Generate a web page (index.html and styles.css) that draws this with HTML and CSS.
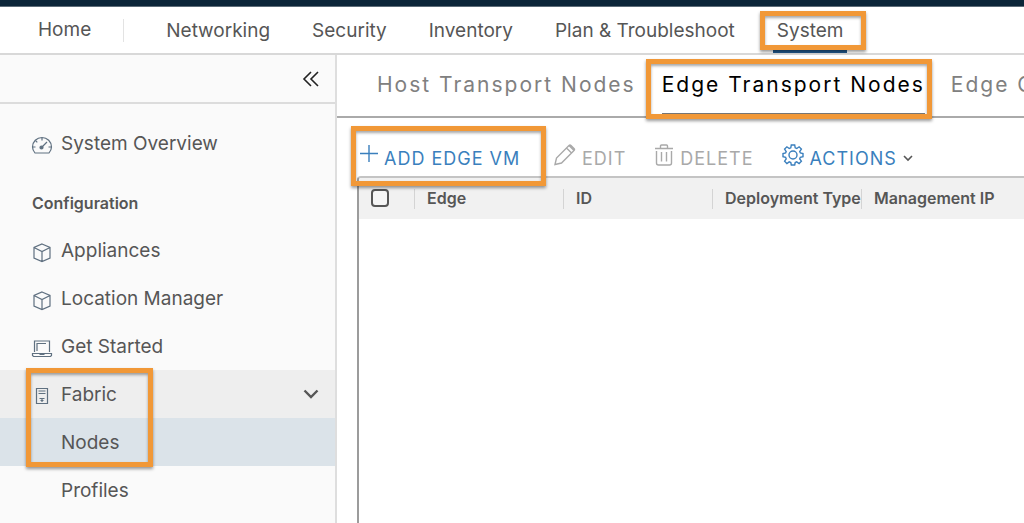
FILE: index.html
```html
<!DOCTYPE html>
<html lang="en">
<head>
<meta charset="utf-8">
<title>Edge Transport Nodes</title>
<link rel="stylesheet" href="styles.css">
</head>
<body>
<div class="app">
  <header class="topbar"></header>
  <nav class="nav" aria-label="Main">
    <a class="nav-link nav-home" href="#">Home</a>
    <a class="nav-link" href="#">Networking</a>
    <a class="nav-link" href="#">Security</a>
    <a class="nav-link" href="#">Inventory</a>
    <a class="nav-link" href="#">Plan &amp; Troubleshoot</a>
    <a class="nav-link nav-active marked mark-system" href="#" aria-current="page">System</a>
  </nav>
  <div class="body">
    <aside class="sidebar">
      <div class="side-head">
        <button class="collapse" type="button" aria-label="Collapse sidebar">
          <svg width="18" height="18" viewBox="0 0 18 18"><path d="M9 2 2 9l7 7M16 2 9 9l7 7"/></svg>
        </button>
      </div>
      <nav class="side-nav" aria-label="System">
        <a class="side-link" href="#">
          <svg class="icon" width="22" height="22" viewBox="0 0 22 22"><path d="M4 19h14c1.600-2 2.500-4 2.500-6a9.500 9.500 0 0 0-19 0c0 2 .9 4 2.500 6ZM11 4v2.500M2 13h2.500M17.500 13H20M4.800 6.800l1.500 1.500M11 13l5-5"/><circle class="solid" cx="10.500" cy="13.500" r="1.500"/></svg>
          <span>System Overview</span>
        </a>
        <h2 class="side-title">Configuration</h2>
        <a class="side-link" href="#">
          <svg class="icon" width="22" height="22" viewBox="0 0 22 22"><path d="m11 3 8 3.500v10.500l-8 3.500-8-3.500V6.500ZM3 6.500l8 4 8-4M11 10.500v10"/></svg>
          <span>Appliances</span>
        </a>
        <a class="side-link" href="#">
          <svg class="icon" width="22" height="22" viewBox="0 0 22 22"><path d="m11 3 8 3.500v10.500l-8 3.500-8-3.500V6.500ZM3 6.500l8 4 8-4M11 10.500v10"/></svg>
          <span>Location Manager</span>
        </a>
        <a class="side-link" href="#">
          <svg class="icon" width="22" height="22" viewBox="0 0 22 22"><path d="M3.500 15V4h15v11M6 14V6.500h9M1.500 16.500h19v2l-1 1h-17l-1-1ZM8.500 17.500h5"/></svg>
          <span>Get Started</span>
        </a>
        <div class="side-group marked mark-fabric">
          <button class="side-link side-open" type="button" aria-expanded="true">
            <svg class="icon" width="22" height="22" viewBox="0 0 22 22"><path d="M5.500 3.500h11v15h-11ZM7.500 6h7M7.500 8.500h7M8.500 13.500h5M11 14v3M9.500 15.500h3"/></svg>
            <span>Fabric</span>
            <svg class="chevron" width="16" height="10" viewBox="0 0 16 10"><path d="m1.500 1.500 6.500 6.500 6.500-6.500"/></svg>
          </button>
          <a class="side-link side-sub side-current" href="#" aria-current="page">Nodes</a>
        </div>
        <a class="side-link side-sub" href="#">Profiles</a>
      </nav>
    </aside>
    <main class="main">
      <nav class="tabs" aria-label="Nodes">
        <a class="tab" href="#">Host Transport Nodes</a>
        <a class="tab tab-active marked mark-tab" href="#" aria-current="page">Edge Transport Nodes</a>
        <a class="tab" href="#">Edge Clusters</a>
      </nav>
      <div class="toolbar">
        <button class="tool tool-add marked mark-add" type="button">
          <svg width="18" height="22" viewBox="0 0 18 22"><path d="M9 1v17M0 9.500h18"/></svg>
          <span>ADD EDGE VM</span>
        </button>
        <button class="tool tool-edit" type="button" disabled>
          <svg width="22" height="22" viewBox="0 0 22 22"><path d="M1 20.500 2.500 14 15 1.500q1-1 2 0l3 3q1 1 0 2L7.500 19ZM12.500 4l5 5M15 1.500l5 5"/></svg>
          <span>EDIT</span>
        </button>
        <button class="tool tool-delete" type="button" disabled>
          <svg width="20" height="22" viewBox="0 0 20 22"><path d="M1 4.500h18M6.500 4.500V2q0-1 1-1h5q1 0 1 1v2.500M2.500 7v12q0 2 2 2h11q2 0 2-2V7M7.500 8v9.500M12.500 8v9.500"/></svg>
          <span>DELETE</span>
        </button>
        <button class="tool" type="button" aria-haspopup="menu">
          <svg width="22" height="22" viewBox="0 0 22 22"><path d="M9.300 1h3.400l.5 2.800 1.600.7 2.300-1.700 2.300 2.300-1.700 2.400.7 1.500 2.600.5v3.200l-2.700.6-.6 1.500 1.700 2.400-2.300 2.300-2.400-1.600-1.500.6-.5 2.500H9.300l-.5-2.500-1.600-.6-2.300 1.600-2.300-2.300 1.600-2.400-.6-1.500-2.600-.6V9.500L3.600 9l.6-1.500-1.600-2.400 2.300-2.300 2.300 1.700 1.600-.7Z"/><circle cx="11" cy="11" r="4"/></svg>
          <span>ACTIONS</span>
          <svg class="caret" width="10" height="7" viewBox="0 0 10 7"><path d="m1 1 4 4 4-4"/></svg>
        </button>
      </div>
      <div class="grid">
        <table class="table">
          <thead>
            <tr>
              <th class="col-check"><input class="check" type="checkbox" aria-label="Select all"></th>
              <th class="col" scope="col">Edge</th>
              <th class="col" scope="col">ID</th>
              <th class="col" scope="col">Deployment Type</th>
              <th class="col-last" scope="col">Management IP</th>
            </tr>
          </thead>
        </table>
      </div>
    </main>
  </div>
</div>
</body>
</html>
```
FILE: styles.css
```css
*,
*::before,
*::after {
  box-sizing: border-box;
}

body {
  margin: 0;
  background: #fff;
  color: #565656;
  font-family: Inter, "Noto Sans", sans-serif;
  font-size: 19px;
}

a {
  color: inherit;
  text-decoration: none;
}

button {
  padding: 0;
  border: 0;
  background: none;
  color: inherit;
  font: inherit;
}

svg {
  flex: none;
  fill: none;
  stroke: currentColor;
}

.app {
  display: flex;
  flex-direction: column;
  min-height: 100vh;
  overflow: hidden;
}

.topbar {
  height: 7px;
  background: #0b2538;
  border-bottom: 1px solid #5d6c78;
}

/* Orange callout frame drawn over the highlighted element */
.marked {
  position: relative;
}

.marked::after {
  content: "";
  position: absolute;
  z-index: 2;
  border: 5px solid #f19837;
  box-shadow: 0 2px 3px rgba(0, 0, 0, 0.4), inset 0 2px 3px rgba(0, 0, 0, 0.35);
  pointer-events: none;
}

.mark-system::after {
  inset: 4px -19px 0 -13px;
}

.mark-fabric::after {
  inset: -2px auto -1px 26px;
  width: 127px;
}

.mark-tab::after {
  inset: 4px -7px -6px -16px;
}

.mark-add::after {
  inset: 8px 0 -10px -9px;
}

.nav {
  display: flex;
  gap: 34px;
  height: 48px;
  padding-left: 34px;
  border-bottom: 2px solid #d8d8d8;
  white-space: nowrap;
}

.nav-link {
  padding: 0 4px;
  line-height: 48px;
}

.nav-home {
  display: flex;
  align-items: center;
  gap: 32px;
}

.nav-home::after {
  content: "";
  width: 1px;
  height: 23px;
  background: #e3e3e3;
}

.nav-active {
  border-bottom: 3px solid #20588c;
}

.body {
  flex: 1;
  display: flex;
}

.sidebar {
  flex: none;
  width: 337px;
  background: #fafafa;
  border-right: 2px solid #dedede;
}

.side-head {
  display: flex;
  align-items: center;
  justify-content: flex-end;
  height: 49px;
  padding-right: 15px;
  border-bottom: 2px solid #dcdcdc;
}

.collapse {
  display: flex;
  color: #222;
  stroke-width: 1.6;
}

.side-nav {
  padding-top: 15px;
}

.side-link {
  display: flex;
  align-items: center;
  gap: 8px;
  width: 100%;
  height: 48px;
  padding: 0 16px 0 31px;
}

.icon {
  margin-top: 4px;
  color: #5f7080;
  stroke-width: 1.2;
}

.solid {
  fill: currentColor;
}

.side-title {
  height: 59px;
  margin: 0;
  padding: 6px 32px 0;
  font-size: 16px;
  font-weight: 600;
  line-height: 60px;
}

.side-open {
  background: #eee;
}

.chevron {
  margin-left: auto;
  stroke-width: 2.4;
}

.side-sub {
  padding-left: 61px;
}

.side-current {
  background: #dbe3e9;
}

.main {
  flex: 1;
  display: flex;
  flex-direction: column;
  min-width: 0;
}

.tabs {
  display: flex;
  gap: 26px;
  height: 63px;
  padding-left: 40px;
  border-bottom: 2px solid #aaa;
  color: #808080;
  font-size: 21px;
  letter-spacing: 2px;
  white-space: nowrap;
}

.tab {
  line-height: 60px;
}

.tab-active {
  border-bottom: 3px solid #777;
  color: #000;
}

.toolbar {
  display: flex;
  height: 58px;
  padding-left: 23px;
  font-size: 18px;
  letter-spacing: 1px;
  white-space: nowrap;
}

.tool {
  display: flex;
  align-items: center;
  gap: 6px;
  color: #3a7fbd;
  letter-spacing: inherit;
  stroke-width: 1.4;
}

.tool span {
  padding-top: 22px;
  line-height: 37px;
}

.tool svg {
  margin-top: 16px;
}

.tool:disabled {
  color: #a9a9a9;
}

.tool-add {
  width: 186px;
}

.tool-edit {
  margin-left: 8px;
}

.tool-delete {
  margin: 0 28px;
}

.tool .caret {
  margin-top: 22px;
  color: #565656;
  stroke-width: 1.6;
}

.grid {
  flex: 1;
  margin-left: 20px;
  border-top: 2px solid #c4c4c4;
  border-left: 2px solid #9c9c9c;
  border-top-left-radius: 4px;
  overflow: hidden;
}

.table {
  width: 100%;
  border-collapse: collapse;
  table-layout: fixed;
  background: #f1f1f1;
  font-size: 16px;
}

.table th {
  height: 41px;
  padding: 0 0 2px 12px;
  font-weight: 600;
  text-align: left;
  white-space: nowrap;
  overflow: hidden;
  background: linear-gradient(#d4d4d4, #d4d4d4) right center / 1px 20px no-repeat;
}

.table .col-check {
  width: 56px;
}

.col {
  width: 149px;
}

.table .col-last {
  background: none;
}

.check {
  display: block;
  appearance: none;
  width: 18px;
  height: 18px;
  margin: 0;
  border: 2px solid #565656;
  border-radius: 4px;
  background: #f5f5f5;
}
```
